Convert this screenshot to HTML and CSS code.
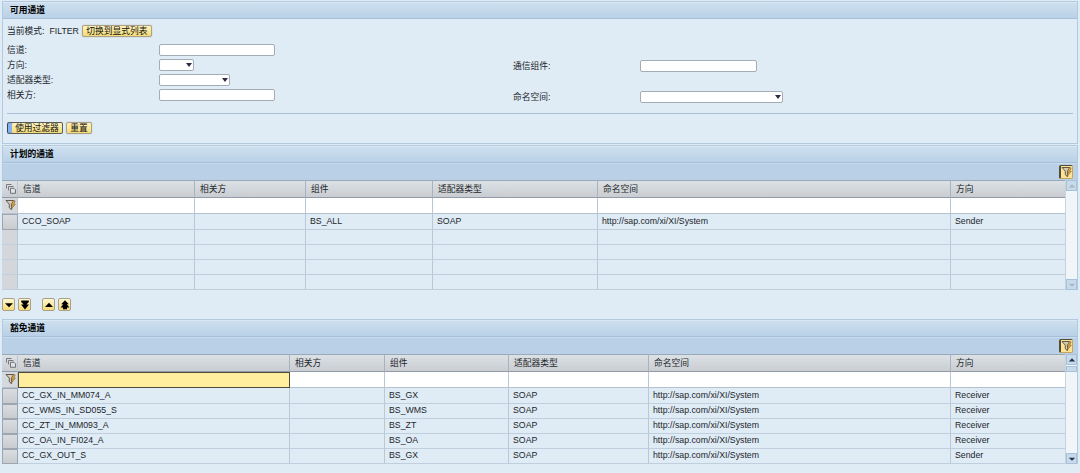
FILE: index.html
```html
<!DOCTYPE html>
<html lang="zh-CN">
<head>
    <meta charset="UTF-8">
    <meta name="viewport" content="width=device-width, initial-scale=1.0">
    <title>可用通道</title>
    <link rel="stylesheet" href="styles.css">
</head>
<body>
    <!-- 图标定义 -->
    <svg class="icon-defs" width="0" height="0">
        <symbol id="icon-select" viewBox="0 0 12 12">
            <path d="M1.5 5.5V1.5H6.5M3.5 7.5V3.5H8.5" fill="none" stroke="#777a80" stroke-width="1"/>
            <path d="M5.5 5.3H9L10.5 6.8V10.3H5.5Z" fill="#dfe3e7" stroke="#6f7278" stroke-width="1"/>
        </symbol>
        <symbol id="icon-funnel" viewBox="0 0 12 12">
            <path d="M1 1.5H8.8L6.6 5V10.6L4.3 8.8V5.2Z" fill="#d3ccb5" stroke="#625a50" stroke-width="1"/>
            <path d="M8.6 1.5L6 5.8H7.4L6 10.4L10.4 5.2H8.8L10.2 2Z" fill="#d9a542" stroke="#70583a" stroke-width="0.5"/>
        </symbol>
        <symbol id="icon-down" viewBox="0 0 10 10">
            <path d="M1 3.3H9L5 7.3Z"/>
        </symbol>
        <symbol id="icon-down-all" viewBox="0 0 10 10">
            <path d="M1.2 0.6H8.8V2L6.4 4.6H9L5 9.4L1 4.6H3.6L1.2 2Z"/>
        </symbol>
        <symbol id="icon-up" viewBox="0 0 10 10">
            <path d="M1 7H9L5 2.8Z"/>
        </symbol>
        <symbol id="icon-up-all" viewBox="0 0 10 10">
            <path d="M5 0.3L8.8 4.2H6.8L9.4 7.4H7V9.3H3V7.4H0.6L3.2 4.2H1.2Z"/>
        </symbol>
    </svg>

    <!-- 可用通道 -->
    <div class="panel filter-panel">
        <div class="panel-title">可用通道</div>
        <form class="filter-form" onsubmit="return false;">
            <div class="mode-row">
                <span>当前模式:</span>
                <span class="mode-value">FILTER</span>
                <button type="button" class="btn btn-switch">切换到显式列表</button>
            </div>
            <div class="filter-fields">
                <div class="field-list">
                    <label for="channel">信道:</label>
                    <input type="text" id="channel" class="field">
                    <label for="direction">方向:</label>
                    <div class="select-box select-small"><select id="direction" class="field"></select></div>
                    <label for="adapter">适配器类型:</label>
                    <div class="select-box select-medium"><select id="adapter" class="field"></select></div>
                    <label for="party">相关方:</label>
                    <input type="text" id="party" class="field">
                </div>
                <div class="field-list field-list-right">
                    <label for="component">通信组件:</label>
                    <input type="text" id="component" class="field">
                    <label for="namespace">命名空间:</label>
                    <div class="select-box select-large"><select id="namespace" class="field"></select></div>
                </div>
            </div>
            <div class="button-group">
                <button type="submit" class="btn btn-default">使用过滤器</button>
                <button type="reset" class="btn btn-reset">重置</button>
            </div>
        </form>
    </div>

    <!-- 计划的通道 -->
    <div class="panel table-panel">
        <div class="panel-title">计划的通道</div>
        <div class="toolbar">
            <button type="button" class="btn-filter"><svg class="icon"><use href="#icon-funnel"/></svg></button>
        </div>
        <div class="table-wrap">
            <table class="channel-table planned">
                <colgroup>
                    <col class="col-select"><col class="col-channel"><col class="col-party"><col class="col-component"><col class="col-adapter"><col class="col-namespace"><col class="col-direction">
                </colgroup>
                <thead>
                    <tr>
                        <th class="select-cell"><svg class="icon"><use href="#icon-select"/></svg></th>
                        <th>信道</th><th>相关方</th><th>组件</th><th>适配器类型</th><th>命名空间</th><th>方向</th>
                    </tr>
                </thead>
                <tbody>
                    <tr class="filter-row">
                        <td class="select-cell"><svg class="icon"><use href="#icon-funnel"/></svg></td>
                        <td></td><td></td><td></td><td></td><td></td><td></td>
                    </tr>
                    <tr>
                        <td class="row-button"></td>
                        <td>CCO_SOAP</td><td></td><td>BS_ALL</td><td>SOAP</td><td>http://sap.com/xi/XI/System</td><td>Sender</td>
                    </tr>
                    <tr class="empty"><td></td><td></td><td></td><td></td><td></td><td></td><td></td></tr>
                    <tr class="empty"><td></td><td></td><td></td><td></td><td></td><td></td><td></td></tr>
                    <tr class="empty"><td></td><td></td><td></td><td></td><td></td><td></td><td></td></tr>
                    <tr class="empty"><td></td><td></td><td></td><td></td><td></td><td></td><td></td></tr>
                </tbody>
            </table>
            <div class="scrollbar disabled">
                <div class="scroll-btn"><svg><use href="#icon-up"/></svg></div>
                <div class="scroll-track"></div>
                <div class="scroll-btn"><svg><use href="#icon-down"/></svg></div>
            </div>
        </div>
    </div>

    <!-- 移动按钮 -->
    <div class="move-buttons">
        <button type="button" class="btn-move"><svg><use href="#icon-down"/></svg></button>
        <button type="button" class="btn-move"><svg><use href="#icon-down-all"/></svg></button>
        <button type="button" class="btn-move btn-move-up"><svg><use href="#icon-up"/></svg></button>
        <button type="button" class="btn-move"><svg><use href="#icon-up-all"/></svg></button>
    </div>

    <!-- 豁免通道 -->
    <div class="panel table-panel">
        <div class="panel-title">豁免通道</div>
        <div class="toolbar">
            <button type="button" class="btn-filter"><svg class="icon"><use href="#icon-funnel"/></svg></button>
        </div>
        <div class="table-wrap">
            <table class="channel-table exempt">
                <colgroup>
                    <col class="col-select"><col class="col-channel"><col class="col-party"><col class="col-component"><col class="col-adapter"><col class="col-namespace"><col class="col-direction">
                </colgroup>
                <thead>
                    <tr>
                        <th class="select-cell"><svg class="icon"><use href="#icon-select"/></svg></th>
                        <th>信道</th><th>相关方</th><th>组件</th><th>适配器类型</th><th>命名空间</th><th>方向</th>
                    </tr>
                </thead>
                <tbody>
                    <tr class="filter-row">
                        <td class="select-cell"><svg class="icon"><use href="#icon-funnel"/></svg></td>
                        <td class="focused"></td><td></td><td></td><td></td><td></td><td></td>
                    </tr>
                    <tr>
                        <td class="row-button"></td>
                        <td>CC_GX_IN_MM074_A</td><td></td><td>BS_GX</td><td>SOAP</td><td>http://sap.com/xi/XI/System</td><td>Receiver</td>
                    </tr>
                    <tr>
                        <td class="row-button"></td>
                        <td>CC_WMS_IN_SD055_S</td><td></td><td>BS_WMS</td><td>SOAP</td><td>http://sap.com/xi/XI/System</td><td>Receiver</td>
                    </tr>
                    <tr>
                        <td class="row-button"></td>
                        <td>CC_ZT_IN_MM093_A</td><td></td><td>BS_ZT</td><td>SOAP</td><td>http://sap.com/xi/XI/System</td><td>Receiver</td>
                    </tr>
                    <tr>
                        <td class="row-button"></td>
                        <td>CC_OA_IN_FI024_A</td><td></td><td>BS_OA</td><td>SOAP</td><td>http://sap.com/xi/XI/System</td><td>Receiver</td>
                    </tr>
                    <tr>
                        <td class="row-button"></td>
                        <td>CC_GX_OUT_S</td><td></td><td>BS_GX</td><td>SOAP</td><td>http://sap.com/xi/XI/System</td><td>Sender</td>
                    </tr>
                </tbody>
            </table>
            <div class="scrollbar">
                <div class="scroll-btn"><svg><use href="#icon-up"/></svg></div>
                <div class="scroll-track"><div class="scroll-thumb"></div></div>
                <div class="scroll-btn"><svg><use href="#icon-down"/></svg></div>
            </div>
        </div>
    </div>
</body>
</html>
```
FILE: styles.css
```css
* {
    box-sizing: border-box;
}
body {
    margin: 0;
    padding: 1px 2px 0;
    height: 473px;
    overflow: hidden;
    background-color: #dfebf5;
    color: #22262b;
    font-family: "Liberation Sans", "Noto Sans CJK SC", sans-serif;
    font-size: 8.75px;
    line-height: 12px;
}
input, select, button {
    font: inherit;
    color: inherit;
    margin: 0;
}
svg {
    display: block;
}
.icon-defs {
    position: absolute;
}
.icon {
    width: 12px;
    height: 12px;
}

/* 面板 */
.panel {
    border: 1px solid #b3c9df;
    width: 1076px;
}
.filter-panel {
    height: 143px;
    margin-bottom: 1px;
}
.panel-title {
    height: 17px;
    padding-left: 7px;
    border-top: 1px solid #dce9f4;
    border-bottom: 1px solid #a7c0da;
    background: linear-gradient(#cddfee, #b9d1e7);
    color: #000;
    font-weight: bold;
    line-height: 15px;
}

/* 过滤条件 */
.filter-form {
    padding: 6px 4px 0;
}
.mode-row {
    display: flex;
    align-items: center;
    height: 12px;
}
.mode-value {
    margin-left: 5px;
}
.btn {
    height: 12px;
    padding: 0;
    border: 1px solid #aba186;
    border-radius: 2px;
    background: linear-gradient(#fff3bd, #f4db77);
    color: #111;
    line-height: 10px;
    white-space: nowrap;
    box-shadow: 0 0 1px #8f8a78;
}
.btn-switch {
    width: 70px;
    margin-left: 3px;
}
.filter-fields {
    display: flex;
    height: 77px;
    padding-top: 5px;
    border-bottom: 1px solid #abc0d8;
}
.field-list {
    display: grid;
    grid-template-columns: 152px 1fr;
    grid-auto-rows: 15.1px;
    align-items: center;
    align-content: start;
    width: 506px;
}
.field-list-right {
    grid-template-columns: 127px 1fr;
    grid-auto-rows: 31.5px;
    padding-top: 8px;
}
.field {
    display: block;
    width: 116px;
    height: 12px;
    padding: 0 3px;
    border: 1px solid #a5acb5;
    border-radius: 2px;
    background-color: #fff;
    appearance: none;
    outline: none;
}
.field-list-right .field {
    width: 117px;
}
.select-box {
    position: relative;
}
.select-box .field,
.field-list-right .select-box .field {
    width: 100%;
}
.select-box::after {
    content: "";
    position: absolute;
    right: 2px;
    top: 4px;
    border: 3px solid transparent;
    border-top: 4px solid #2c2c40;
    border-bottom: none;
}
.select-small {
    width: 35px;
}
.select-medium {
    width: 71px;
}
.select-large {
    width: 143px;
}
.button-group {
    display: flex;
    gap: 3px;
    padding-top: 8px;
}
.btn-default {
    width: 56px;
    padding-left: 5px;
    border-color: #5d5b55;
    border-left: 0;
    box-shadow: inset 1px 0 #34435e, inset 5px 0 #86b1eb;
}
.btn-reset {
    width: 26px;
}

/* 工具栏 */
.toolbar {
    display: flex;
    justify-content: flex-end;
    height: 17px;
    padding: 1px 4px 0;
    border-top: 1px solid #c8dbec;
    background-color: #b9d0e7;
}
.btn-filter {
    width: 14px;
    height: 14px;
    padding: 0;
    border: 1px solid #c5a55d;
    border-top-color: #514b3b;
    border-left: 2px solid #514b3b;
    border-radius: 2px;
    background-color: #ffe391;
}
.btn-filter .icon {
    width: 12px;
    height: 12px;
}

/* 通道表格 */
.table-panel {
    height: 145px;
    border-bottom: 0;
}
.table-wrap {
    display: flex;
    height: 110px;
    margin-left: -1px;
}
.channel-table {
    width: 1063px;
    table-layout: fixed;
    border-collapse: separate;
    border-spacing: 0;
}
.col-select { width: 16px; }
.planned .col-channel { width: 177px; }
.planned .col-party { width: 111px; }
.planned .col-component { width: 127px; }
.planned .col-adapter { width: 165px; }
.planned .col-namespace { width: 353px; }
.exempt .col-channel { width: 272px; }
.exempt .col-party { width: 95px; }
.exempt .col-component { width: 124px; }
.exempt .col-adapter { width: 140px; }
.exempt .col-namespace { width: 302px; }
.channel-table th {
    height: 18px;
    padding: 0 0 0 5px;
    border-top: 1px solid #9aa9b9;
    border-right: 1px solid #a9b3bf;
    border-bottom: 1px solid #929ca8;
    background: linear-gradient(#dce1e5, #c9cdd1);
    font-weight: normal;
    line-height: 12px;
    text-align: left;
}
.channel-table td {
    height: 15px;
    padding: 0 0 2px 4px;
    border-right: 1px solid #b9c7d7;
    border-bottom: 1px solid #c0cedd;
    line-height: 12px;
    white-space: nowrap;
}
.channel-table tr > :last-child {
    border-right: 0;
}
.channel-table .filter-row td {
    height: 16px;
    border-bottom-color: #b3c1d1;
    background-color: #fff;
}
.channel-table .filter-row + tr td {
    height: 16px;
}
.channel-table th.select-cell,
.channel-table .filter-row td.select-cell {
    padding: 0 0 1px 3px;
    border-right-color: #c0c5cc;
}
.channel-table .filter-row td.select-cell {
    background-color: #d5d8dc;
}
.channel-table .filter-row td.focused {
    border: 1px solid #4e4a3c;
    background-color: #ffee9e;
}
.channel-table td.row-button {
    border: 1px solid #9da5b0;
    background: linear-gradient(#d9dce0, #c8cccf);
}
.channel-table .empty td:first-child {
    background-color: #d3d6da;
}

/* 滚动条 */
.scrollbar {
    display: flex;
    flex-direction: column;
    width: 12px;
    border-left: 1px solid #c7d2df;
    background-color: #f0f5f9;
}
.scroll-btn {
    display: flex;
    align-items: center;
    justify-content: center;
    height: 11px;
    border: 1px solid #a9c1d9;
    background-color: #c5daeb;
    fill: #2c2f45;
}
.scroll-btn svg {
    width: 8px;
    height: 8px;
}
.scroll-track {
    flex: 1;
    padding-top: 1px;
}
.scroll-thumb {
    height: 6px;
    border: 1px solid #a9c1d9;
    background-color: #c5daeb;
}
.scrollbar.disabled .scroll-btn {
    fill: #acb6c0;
}

/* 上移 / 下移 */
.move-buttons {
    display: flex;
    gap: 3px;
    height: 29px;
    padding-top: 8px;
}
.btn-move {
    width: 13px;
    height: 13px;
    padding: 0 0 0 1px;
    border: 1px solid #aaa087;
    border-radius: 2px;
    background: linear-gradient(#fff7d3, #f5dc75);
}
.btn-move svg {
    width: 10px;
    height: 10px;
}
.btn-move-up {
    margin-left: 8px;
}
```
